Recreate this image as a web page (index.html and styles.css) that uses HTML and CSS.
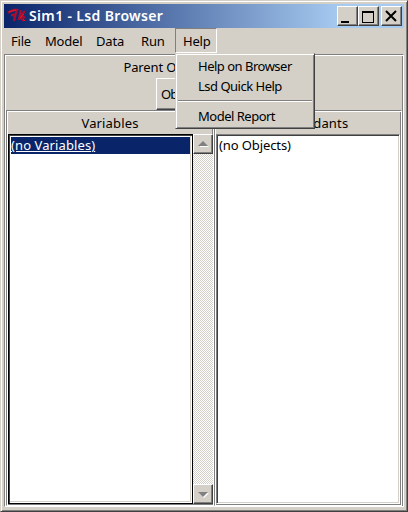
FILE: index.html
```html
<!DOCTYPE html>
<html lang="en">
<head>
<meta charset="utf-8">
<title>Sim1 - Lsd Browser</title>
<link rel="stylesheet" href="styles.css">
</head>
<body>
<div class="window">
  <header class="titlebar">
    <svg class="logo" width="20" height="20" viewBox="0 0 20 20"><path d="M1 7Q5 3 10 4Q8 9 7 15M4 9L8 9M14 4L12 14M18 5L13 11L17 15M14 9L18 12" fill="none" stroke="#a90d30" stroke-width="2.3"/><path d="M2 6L9 4M13 12L17 8M16 13L18 15" stroke="#ed1828" stroke-width="1"/></svg>
    <h1>Sim1 - Lsd Browser</h1>
    <div class="controls">
      <button aria-label="Minimize"><svg width="18" height="18"><path d="M3 14h8v2H3z"/></svg></button>
      <button aria-label="Maximize"><svg width="18" height="18"><path d="M3 4h12v12H3zM4 6v9h10V6z" fill-rule="evenodd"/></svg></button>
      <button class="close" aria-label="Close"><svg width="18" height="18"><path d="M4 4l10 10M14 4L4 14" stroke="#000" stroke-width="2"/></svg></button>
    </div>
  </header>
  <nav class="menubar">
    <span class="file">File</span><span class="model">Model</span><span class="data">Data</span><span class="run">Run</span>
    <div class="help"><span>Help</span>
      <div class="dropdown">
        <div class="browser">Help on Browser</div>
        <div class="quick">Lsd Quick Help</div>
        <hr>
        <div class="report">Model Report</div>
      </div>
    </div>
  </nav>
  <main class="outer">
    <section class="parent"><div class="parent-label">Parent Object</div><button class="object">Objects</button></section>
    <div class="columns">
      <section class="pane">
        <h2>Variables</h2>
        <div class="content">
          <div class="list focused"><div class="selected"><span>(no Variables)</span></div></div>
          <div class="scrollbar">
            <button aria-label="Scroll up"><svg width="18" height="18"><path d="M6 12h9l-1-1H6z" fill="#fff"/><path d="M4 11l5-5 5 5z" fill="#808080"/></svg></button>
            <div class="track"></div>
            <button aria-label="Scroll down"><svg width="18" height="18"><path d="M5 8h10l-5 5z" fill="#fff"/><path d="M4 7h10l-5 5z" fill="#808080"/></svg></button>
          </div>
        </div>
      </section>
      <section class="pane objects">
        <h2>Descendants</h2>
        <div class="content"><div class="list"><div class="empty">(no Objects)</div></div></div>
      </section>
    </div>
  </main>
</div>
</body>
</html>
```
FILE: styles.css
```css
* { box-sizing: border-box; }
body { margin: 0; font: 13px/17px "Noto Sans", sans-serif; color: #000; }
.window { width: 408px; height: 512px; background: #d4d0c8; border: 1px solid; border-color: #d4d0c8 #404040 #404040 #d4d0c8; box-shadow: inset 1px 1px #fff, inset -1px -1px #808080; padding: 3px; display: flex; flex-direction: column; }
.titlebar { width: 400px; height: 24px; flex: none; display: flex; align-items: center; padding-left: 3px; background: linear-gradient(90deg, #0a246a, #a6caf0 84%); }
.logo { flex: none; }
h1 { margin: 0 0 0 2px; font: 600 14px/24px "Noto Sans", sans-serif; letter-spacing: .35px; color: #fff; flex: 1; white-space: nowrap; }
.controls { display: flex; padding-right: 2px; }
button { margin: 0; padding: 0; border: 1px solid; border-color: #fff #404040 #404040 #fff; box-shadow: inset -1px -1px #808080; background: #d4d0c8; font: inherit; color: #000; }
.controls button { width: 21px; height: 20px; }
.close { margin-left: 2px; }
button svg { display: block; }
.menubar { height: 26px; flex: none; display: flex; line-height: 26px; padding-left: 7px; letter-spacing: -.2px; }
.menubar > span { white-space: nowrap; }
.file { width: 34px; }
.model { width: 51px; }
.data { width: 45px; }
.run { width: 34px; }
.help { position: relative; width: 42px; height: 25px; padding-left: 7px; border: 1px solid; border-color: #808080 #fff #fff #808080; line-height: 25px; white-space: nowrap; }
.dropdown { position: absolute; left: -1px; top: 24px; width: 140px; height: 76px; padding: 2px 2px; border: 1px solid; border-color: #d4d0c8 #404040 #404040 #d4d0c8; box-shadow: inset 1px 1px #fff, inset -1px -1px #808080; background: #d4d0c8; line-height: 20px; z-index: 1; letter-spacing: -.5px; }
.dropdown div { height: 20px; padding-left: 20px; }
hr { margin: 4px 0; border: 0; border-top: 1px solid #808080; border-bottom: 1px solid #fff; }
.outer { width: 400px; height: 453px; display: flex; flex-direction: column; border: 1px solid; border-color: #808080 #fff #fff #808080; box-shadow: inset 1px 1px #fff, inset -1px -1px #808080; padding: 1px; }
.parent { height: 54px; flex: none; padding-top: 3px; display: flex; flex-direction: column; align-items: center; }
.parent-label { width: 161px; height: 19px; line-height: 17px; letter-spacing: -.15px; }
.object { width: 96px; height: 32px; text-align: left; padding-left: 4px; letter-spacing: -1px; }
.columns { display: flex; width: 396px; height: 396px; }
.pane { width: 208px; border: 1px solid; border-color: #808080 #fff #fff #808080; box-shadow: inset 1px 1px #fff, inset -1px -1px #808080; padding: 1px; }
.objects { width: 188px; }
h2 { margin: 0; height: 22px; font: 13px/23px "Noto Sans", sans-serif; letter-spacing: .15px; text-align: center; }
.content { display: flex; height: 370px; }
.list { flex: 1; background: #fff; border: 1px solid; border-color: #808080 #fff #fff #808080; box-shadow: inset 1px 1px #404040, inset -1px -1px #d4d0c8; padding: 2px; }
.focused { border-color: #000; box-shadow: inset 1px 1px #404040, inset -1px -1px #fff, inset -2px -2px #d4d0c8; }
.list div { height: 17px; line-height: 17px; white-space: nowrap; letter-spacing: .1px; }
.list .empty { letter-spacing: -.1px; }
.selected { background: #0a246a; color: #fff; text-decoration: underline; width: 179px; }
.scrollbar { width: 21px; display: flex; flex-direction: column; }
.scrollbar button { height: 20px; flex: none; }
.track { flex: 1; background: repeating-conic-gradient(#d4d0c8 0 25%, #fff 0 50%) 0 0 / 2px 2px; }
```
